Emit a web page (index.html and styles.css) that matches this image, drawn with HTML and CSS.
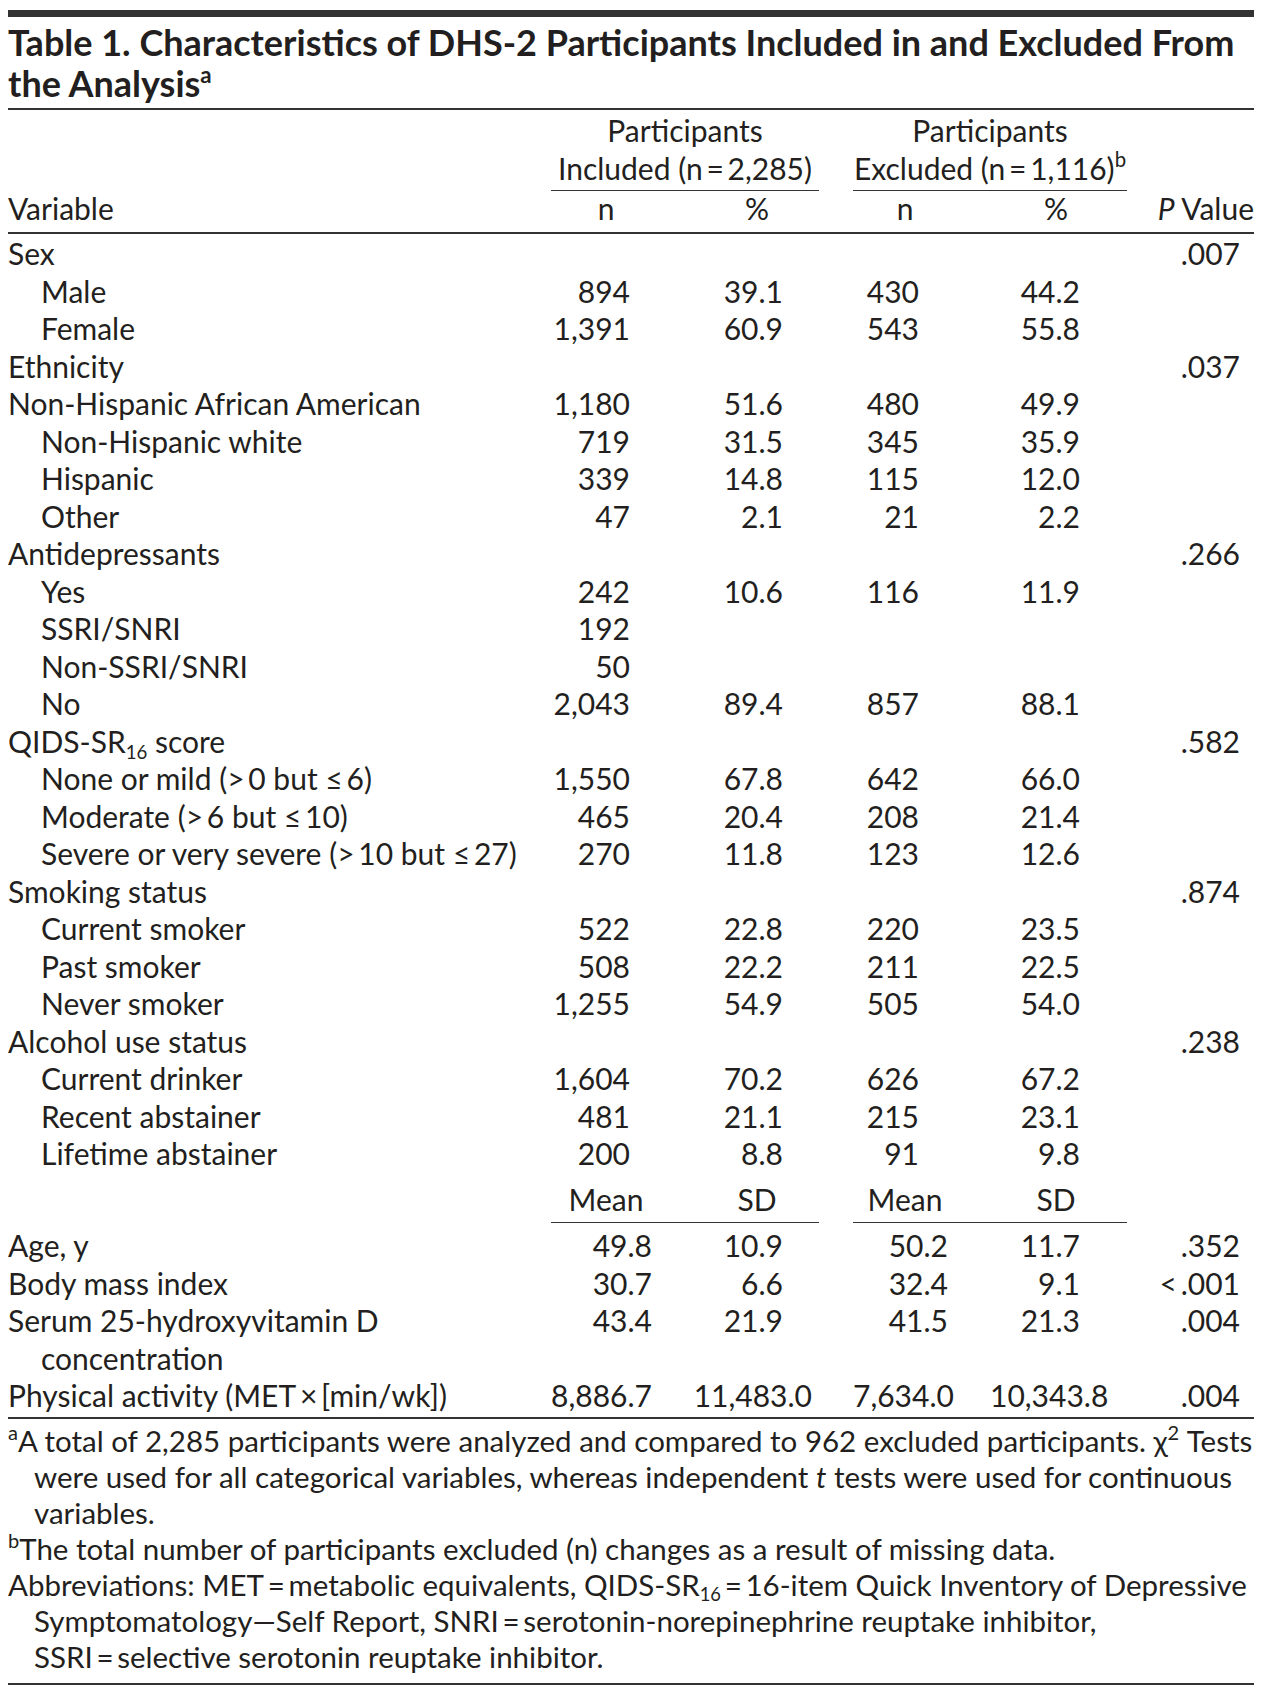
FILE: index.html
```html
<!DOCTYPE html>
<html lang="en">
<head>
<meta charset="utf-8">
<title>Table 1</title>
<link rel="stylesheet" href="styles.css">
</head>
<body>
<div class="page">
  <div class="topbar"></div>
  <h1 class="title">Table 1. Characteristics of DHS-2 Participants Included in and Excluded From<br>the Analysis<span class="sup">a</span></h1>
  <table class="tbl">
    <colgroup>
      <col class="w-var"><col class="w-c1"><col class="w-c2"><col class="w-sp"><col class="w-c3"><col class="w-c4"><col class="w-p">
    </colgroup>
    <thead>
      <tr class="hr1">
        <th></th>
        <th colspan="2" class="span">Participants</th>
        <th></th>
        <th colspan="2" class="span">Participants</th>
        <th></th>
      </tr>
      <tr class="hr2">
        <th></th>
        <th colspan="2" class="span ul">Included (n&thinsp;=&thinsp;2,285)</th>
        <th></th>
        <th colspan="2" class="span ul">Excluded (n&thinsp;=&thinsp;1,116)<span class="sup">b</span></th>
        <th></th>
      </tr>
      <tr class="hr3">
        <th class="lab">Variable</th>
        <th class="h1">n</th>
        <th class="h2">%</th>
        <th></th>
        <th class="h3">n</th>
        <th class="h4">%</th>
        <th class="pvh"><i>P</i> Value</th>
      </tr>
    </thead>
    <tbody class="cat">
      <tr class="first"><td class="lab">Sex</td><td></td><td></td><td></td><td></td><td></td><td class="pv">.007</td></tr>
      <tr><td class="lab ind">Male</td><td class="c1">894</td><td class="c2">39.1</td><td></td><td class="c3">430</td><td class="c4">44.2</td><td></td></tr>
      <tr><td class="lab ind">Female</td><td class="c1">1,391</td><td class="c2">60.9</td><td></td><td class="c3">543</td><td class="c4">55.8</td><td></td></tr>
      <tr><td class="lab">Ethnicity</td><td></td><td></td><td></td><td></td><td></td><td class="pv">.037</td></tr>
      <tr><td class="lab">Non-Hispanic African American</td><td class="c1">1,180</td><td class="c2">51.6</td><td></td><td class="c3">480</td><td class="c4">49.9</td><td></td></tr>
      <tr><td class="lab ind">Non-Hispanic white</td><td class="c1">719</td><td class="c2">31.5</td><td></td><td class="c3">345</td><td class="c4">35.9</td><td></td></tr>
      <tr><td class="lab ind">Hispanic</td><td class="c1">339</td><td class="c2">14.8</td><td></td><td class="c3">115</td><td class="c4">12.0</td><td></td></tr>
      <tr><td class="lab ind">Other</td><td class="c1">47</td><td class="c2">2.1</td><td></td><td class="c3">21</td><td class="c4">2.2</td><td></td></tr>
      <tr><td class="lab">Antidepressants</td><td></td><td></td><td></td><td></td><td></td><td class="pv">.266</td></tr>
      <tr><td class="lab ind">Yes</td><td class="c1">242</td><td class="c2">10.6</td><td></td><td class="c3">116</td><td class="c4">11.9</td><td></td></tr>
      <tr><td class="lab ind">SSRI/SNRI</td><td class="c1">192</td><td></td><td></td><td></td><td></td><td></td></tr>
      <tr><td class="lab ind">Non-SSRI/SNRI</td><td class="c1">50</td><td></td><td></td><td></td><td></td><td></td></tr>
      <tr><td class="lab ind">No</td><td class="c1">2,043</td><td class="c2">89.4</td><td></td><td class="c3">857</td><td class="c4">88.1</td><td></td></tr>
      <tr><td class="lab">QIDS-SR<span class="sub">16</span> score</td><td></td><td></td><td></td><td></td><td></td><td class="pv">.582</td></tr>
      <tr><td class="lab ind">None or mild (&gt;&thinsp;0 but ≤&thinsp;6)</td><td class="c1">1,550</td><td class="c2">67.8</td><td></td><td class="c3">642</td><td class="c4">66.0</td><td></td></tr>
      <tr><td class="lab ind">Moderate (&gt;&thinsp;6 but ≤&thinsp;10)</td><td class="c1">465</td><td class="c2">20.4</td><td></td><td class="c3">208</td><td class="c4">21.4</td><td></td></tr>
      <tr><td class="lab ind">Severe or very severe (&gt;&thinsp;10 but ≤&thinsp;27)</td><td class="c1">270</td><td class="c2">11.8</td><td></td><td class="c3">123</td><td class="c4">12.6</td><td></td></tr>
      <tr><td class="lab">Smoking status</td><td></td><td></td><td></td><td></td><td></td><td class="pv">.874</td></tr>
      <tr><td class="lab ind">Current smoker</td><td class="c1">522</td><td class="c2">22.8</td><td></td><td class="c3">220</td><td class="c4">23.5</td><td></td></tr>
      <tr><td class="lab ind">Past smoker</td><td class="c1">508</td><td class="c2">22.2</td><td></td><td class="c3">211</td><td class="c4">22.5</td><td></td></tr>
      <tr><td class="lab ind">Never smoker</td><td class="c1">1,255</td><td class="c2">54.9</td><td></td><td class="c3">505</td><td class="c4">54.0</td><td></td></tr>
      <tr><td class="lab">Alcohol use status</td><td></td><td></td><td></td><td></td><td></td><td class="pv">.238</td></tr>
      <tr><td class="lab ind">Current drinker</td><td class="c1">1,604</td><td class="c2">70.2</td><td></td><td class="c3">626</td><td class="c4">67.2</td><td></td></tr>
      <tr><td class="lab ind">Recent abstainer</td><td class="c1">481</td><td class="c2">21.1</td><td></td><td class="c3">215</td><td class="c4">23.1</td><td></td></tr>
      <tr><td class="lab ind">Lifetime abstainer</td><td class="c1">200</td><td class="c2">8.8</td><td></td><td class="c3">91</td><td class="c4">9.8</td><td></td></tr>
    </tbody>
    <tbody class="cont">
      <tr class="mhead">
        <td></td>
        <td class="h1 ul">Mean</td>
        <td class="h2 ul">SD</td>
        <td></td>
        <td class="h3 ul">Mean</td>
        <td class="h4 ul">SD</td>
        <td></td>
      </tr>
      <tr class="afterhead"><td class="lab">Age, y</td><td class="m1">49.8</td><td class="m2">10.9</td><td></td><td class="m3">50.2</td><td class="m4">11.7</td><td class="pv">.352</td></tr>
      <tr><td class="lab">Body mass index</td><td class="m1">30.7</td><td class="m2">6.6</td><td></td><td class="m3">32.4</td><td class="m4">9.1</td><td class="pv">&lt;&thinsp;.001</td></tr>
      <tr><td class="lab hang">Serum 25-hydroxyvitamin D<br>concentration</td><td class="m1">43.4</td><td class="m2">21.9</td><td></td><td class="m3">41.5</td><td class="m4">21.3</td><td class="pv">.004</td></tr>
      <tr class="last"><td class="lab">Physical activity (MET&thinsp;×&thinsp;[min/wk])</td><td class="m1">8,886.7</td><td class="m2 wide">11,483.0</td><td></td><td class="m3">7,634.0</td><td class="m4 wide">10,343.8</td><td class="pv">.004</td></tr>
    </tbody>
  </table>
  <div class="notes">
    <p class="note"><span class="sup">a</span>A total of 2,285 participants were analyzed and compared to 962 excluded participants. χ<span class="sup">2</span> Tests<br>were used for all categorical variables, whereas independent <i>t</i> tests were used for continuous<br>variables.</p>
    <p class="note"><span class="sup">b</span>The total number of participants excluded (n) changes as a result of missing data.</p>
    <p class="note">Abbreviations: MET&thinsp;=&thinsp;metabolic equivalents, QIDS-SR<span class="sub">16</span>&thinsp;=&thinsp;16-item Quick Inventory of Depressive<br>Symptomatology—Self Report, SNRI&thinsp;=&thinsp;serotonin-norepinephrine reuptake inhibitor,<br>SSRI&thinsp;=&thinsp;selective serotonin reuptake inhibitor.</p>
  </div>
</div>
</body>
</html>
```

FILE: styles.css
```css
html, body {
  margin: 0;
  padding: 0;
  background: #ffffff;
}

body {
  font-family: Lato, "Liberation Sans", sans-serif;
  color: #231f20;
}

.page {
  width: 1246px;
  margin: 0 8px;
  padding-top: 10px;
}

.topbar {
  height: 7px;
  background: #333333;
}

.title {
  margin: 5px 0 0;
  padding-bottom: 4px;
  font-size: 36px;
  line-height: 41px;
  font-weight: 700;
  white-space: nowrap;
  border-bottom: 2px solid #333333;
}

.sup {
  font-size: 68%;
  vertical-align: 0.62em;
  line-height: 0;
}

.title .sup {
  font-size: 62%;
}

.sub {
  font-size: 62%;
  vertical-align: -0.3em;
  line-height: 0;
}

.tbl {
  width: 1246px;
  table-layout: fixed;
  border-collapse: separate;
  border-spacing: 0;
  font-size: 30px;
  line-height: 37.5px;
}

.w-var { width: 543px; }
.w-c1 { width: 134px; }
.w-c2 { width: 134px; }
.w-sp { width: 34px; }
.w-c3 { width: 137px; }
.w-c4 { width: 137px; }
.w-p { width: 127px; }

.tbl th,
.tbl td {
  padding: 0;
  font-weight: 400;
  white-space: nowrap;
  vertical-align: top;
}

.tbl th.span {
  text-align: center;
}

.hr1 th {
  padding-top: 2px;
}

.hr2 th {
  padding-bottom: 3px;
}

.hr2 th.ul {
  border-bottom: 1.5px solid #333333;
}

.hr3 th {
  line-height: 34px;
  padding-bottom: 7px;
  border-bottom: 2px solid #333333;
}

.lab {
  text-align: left;
}

.ind {
  padding-left: 33px !important;
}

.hang {
  padding-left: 33px !important;
  text-indent: -33px;
  white-space: normal !important;
}

.h1 { text-align: center; padding-right: 24px !important; }
.h2 { text-align: center; padding-left: 10px !important; }
.h3 { text-align: center; padding-right: 33px !important; }
.h4 { text-align: center; padding-right: 5px !important; }

.pvh {
  text-align: right;
}

.c1, .c2, .c3, .c4, .m1, .m2, .m3, .m4, .pv {
  text-align: right;
}

.c1 { padding-right: 55px !important; }
.c2 { padding-right: 36px !important; }
.c3 { padding-right: 71px !important; }
.c4 { padding-right: 47px !important; }
.pv { padding-right: 14px !important; }

.m1 { padding-right: 33px !important; }
.m2 { padding-right: 36px !important; }
.m3 { padding-right: 42px !important; }
.m4 { padding-right: 47px !important; }
.m2.wide { padding-right: 7px !important; }
.m4.wide { padding-right: 22px !important; }

.cat tr.first td {
  padding-top: 1px;
}

.mhead td {
  padding-top: 8px;
  padding-bottom: 4px;
}

.mhead td.ul {
  border-bottom: 1.5px solid #333333;
}

.cont tr.afterhead td {
  padding-top: 4px;
}

.cont tr.last td {
  padding-bottom: 2px;
  border-bottom: 2px solid #333333;
}

.notes {
  padding: 4px 0 8px;
  border-bottom: 2px solid #333333;
}

.note {
  margin: 0;
  font-size: 29.5px;
  line-height: 36px;
  padding-left: 26px;
  text-indent: -26px;
  white-space: nowrap;
}
```
